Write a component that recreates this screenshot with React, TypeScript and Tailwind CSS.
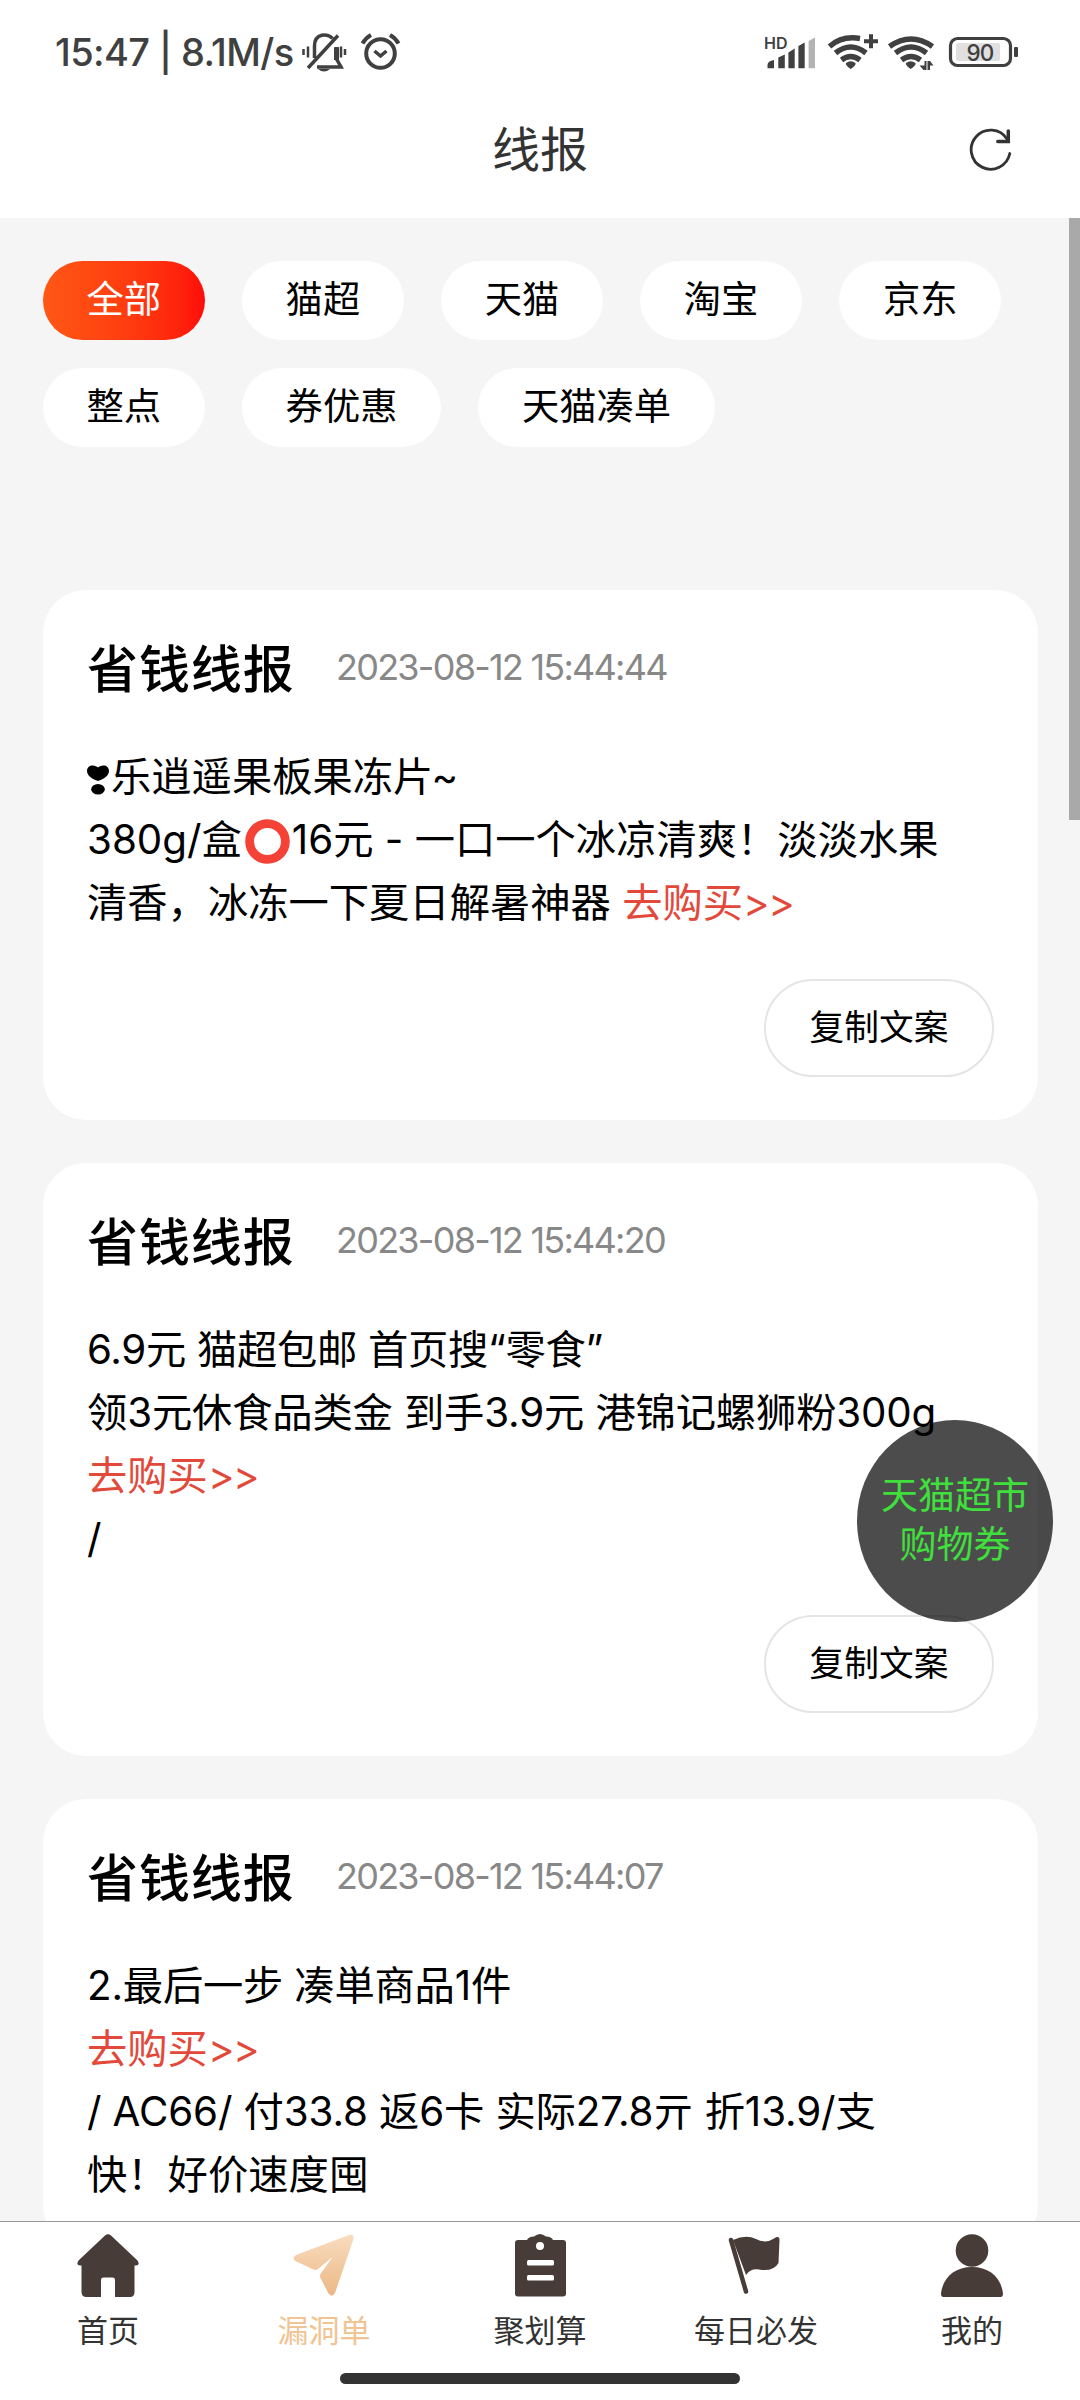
import type { ReactNode } from 'react'

const tabs = ['全部', '猫超', '天猫', '淘宝', '京东', '整点', '券优惠', '天猫凑单']

function HeartMark() {
  return (
    <svg className="inline-block w-[22px] h-[30px] mr-[2px] align-[-4px]" viewBox="0 0 22 30" role="img" aria-label="❣">
      <path d="M11 16C6 14.500 0 11 0 6C0 2.500 2.500 0.500 5.500 0.500C8 0.500 10 1.500 11 2.500C12 1.500 14 0.500 16.500 0.500C19.500 0.500 22 2.500 22 6C22 11 16 14.500 11 16Z" />
      <ellipse cx="11" cy="24.200" rx="6.800" ry="5.200" />
    </svg>
  )
}

function RedCircle() {
  return (
    <svg className="inline-block w-[45px] h-[45px] ml-[3px] mr-[2px] mt-[-22px] align-[-9px] relative top-[1px]" viewBox="0 0 45 45" role="img" aria-label="⭕">
      <circle cx="22.500" cy="22.500" r="17.900" fill="none" stroke="#f44336" strokeWidth="8.800" />
    </svg>
  )
}

function BuyLink() {
  return <a className="text-[#e2493b]">去购买<span className="tracking-[-1.500px]">&gt;&gt;</span></a>
}

function Line({ children, className = '' }: { children: ReactNode, className?: string }) {
  return <div className={`h-[63px] whitespace-nowrap ${className}`}>{children}</div>
}

function DealCard({ date, copyable = true, children }: { date: string, copyable?: boolean, children: ReactNode }) {
  return (
    <div className="rounded-[43px] bg-white px-11 pt-[42px] pb-[43px] shrink-0">
      <div className="flex items-center h-[70px]">
        <h2 className="w-[207px] pt-[5px] text-[51px] leading-[70px] font-medium tracking-[0.900px] whitespace-nowrap">省钱线报</h2>
        <p className="ml-[42px] text-[36px] leading-[70px] tracking-[-1.750px] text-[#888]">{date}</p>
      </div>
      <div className="mt-[43px] text-[40.300px] leading-[63px]">{children}</div>
      {copyable && (
        <div className="flex justify-end mt-[45px]">
          <button className="w-[230px] h-[98px] rounded-full border-2 border-[#e5e5e5] text-[34.700px] leading-[90px] pb-[3px]">复制文案</button>
        </div>
      )}
    </div>
  )
}

function StatusBar() {
  return (
    <div className="flex items-center h-[104px] pl-[55px] text-[#404040]">
      <span className="w-[247px] text-[38px] font-medium tracking-[-0.600px] whitespace-nowrap">15:47 | 8.1M/s</span>
      <svg className="w-[100px] h-[40px]" viewBox="302 32 100 40" fill="none" stroke="currentColor">
        <path d="M303.500 49v6M308 46.500v11M341 46.500v11M345 49v6" strokeWidth="2.500" />
        <path d="M314.500 58V46C314.500 33 328 33 332.500 38.500M338 35.500L308 68M336 47V58L341 67H317" strokeWidth="3.500" />
        <path d="M334 48v12h5V47z" fill="currentColor" stroke="none" />
        <path d="M318 69h12q-6 5-12 0z" fill="currentColor" stroke="none" />
        <circle cx="380.500" cy="53.500" r="14.300" strokeWidth="4" />
        <path d="M374.500 51l6 5 6-5" strokeWidth="3.500" />
        <path d="M362.500 43.500q3-5.500 8.500-8.500M398.500 43.500q-3-5.500-8.500-8.500" strokeWidth="4" />
      </svg>
      <svg className="w-[255px] h-[40px] ml-[363px]" viewBox="765 32 255 40" fill="currentColor">
        <text x="764" y="48.500" className="text-[16px] font-semibold">HD</text>
        <path d="M767.500 68.300V65q0-4 6.500-5v8.300zM778.300 68.300V57.500l6.500-3v13.800zM788.400 68.300V52.500l6.300-4v19.800zM798.400 68.300V46l6.300-3.500v25.800z" />
        <path d="M808.600 68.300V41l6.400-3.500v30.800z" fill="#b3b3b3" />
        <g fill="none" stroke="currentColor" strokeWidth="5.500">
          <path d="M829.500 46.500Q842 35.500 860 38.500" />
          <path d="M835.500 53Q850.700 41 866 53" />
          <path d="M841.500 60Q850.700 53 860 60" />
          <path d="M889.500 46.500Q911 31.500 932.500 46.500" />
          <path d="M895.500 53Q911 41 926.500 53" />
          <path d="M901.500 60Q911 53 920.500 60" />
        </g>
        <path d="M846 63q4.700-3.500 9.500 0 1 2-4.800 6-5.700-4-4.700-6zM906 63q4.700-3.500 9.500 0 1 2-4.800 6-5.700-4-4.700-6z" />
        <path d="M864 41.200h14M871 34.200v14" stroke="currentColor" strokeWidth="4" />
        <path d="M919.500 65.500h5V61h2v9h-3zM927.500 70v-9h2.500l3.500 4.500H930V70z" />
        <rect x="950.500" y="38.500" width="60" height="27" rx="7" fill="none" stroke="currentColor" strokeWidth="3.200" />
        <rect x="956" y="43" width="44" height="18" rx="2" fill="#e0e0e0" />
        <text x="980" y="60.800" textAnchor="middle" className="text-[22.500px] font-medium tracking-[-0.800px]">90</text>
        <rect x="1014" y="47" width="4" height="10" rx="1" />
      </svg>
    </div>
  )
}

const navItems = [
  {
    label: '首页',
    icon: (
      <path fill="#473c37" d="M29 1.500Q32 -1 35 1.500L61.500 26.500Q64.500 31 60 31.500H58.500V58Q58.500 63 54 63H39V46Q39 43.500 36.500 43.500H27.500Q25 43.500 25 46V63H10.500Q5.500 63 5.500 58V31.500H4Q-0.500 31 2.500 26.500Z" />
    ),
  },
  {
    label: '漏洞单',
    active: true,
    icon: (
      <>
        <defs>
          <linearGradient id="plane" x1="0" y1="0" x2="0" y2="1">
            <stop offset="0" stopColor="#f9dcc0" />
            <stop offset="1" stopColor="#ebb884" />
          </linearGradient>
        </defs>
        <path fill="url(#plane)" d="M57 1Q62 -0.500 61.500 5L43 59Q40 64 36.500 59.500L28.500 44Q27.500 42 28.500 40L40.500 23L26 35Q24 36.500 21.500 35.500L3.500 27Q-0.500 24.500 4 21Z" />
      </>
    ),
  },
  {
    label: '聚划算',
    icon: (
      <>
        <path fill="#473c37" d="M10 6H19Q20.500 2.500 26 2.500Q29 0 32 0Q35 0 38 2.500Q43.500 2.500 45 6H55Q58 6 58 9V59.500Q58 62.500 55 62.500H10Q7 62.500 7 59.500V9Q7 6 10 6Z" />
        <circle cx="32" cy="12" r="4" fill="#fff" />
        <rect x="19" y="26" width="27" height="5.500" rx="1.500" fill="#fff" />
        <rect x="19" y="41" width="27" height="5.500" rx="1.500" fill="#fff" />
      </>
    ),
  },
  {
    label: '每日必发',
    icon: (
      <>
        <path fill="#473c37" d="M9 6Q22 0 32 5Q42 10 50 4.500Q55.500 1 55.500 6L54.500 29Q50 37 38 36Q27 33 22 41Z" />
        <path stroke="#473c37" strokeWidth="4.500" strokeLinecap="round" d="M7 6L22 57.500" />
      </>
    ),
  },
  {
    label: '我的',
    icon: (
      <>
        <circle cx="32" cy="16.500" r="16.300" fill="#473c37" />
        <path fill="#473c37" d="M3.500 63Q1 63 1 59.500C3 43 15 33 32 33S61 43 63 59.500Q63 63 60.500 63Z" />
      </>
    ),
  },
]

export default function App() {
  return (
    <div className="relative flex flex-col w-[1080px] h-[2400px] overflow-hidden bg-[#f5f5f5] text-black font-['Inter','Noto_Sans_CJK_SC',sans-serif]">
      <header className="bg-white h-[218px] shrink-0">
        <StatusBar />
        <div className="grid grid-cols-[1fr_auto_1fr] items-center h-[88px] text-[#333]">
          <h1 className="col-start-2 pt-[2px] text-[48px] leading-[88px]">线报</h1>
          <svg className="w-[44px] h-[44px] justify-self-end mr-[68px]" viewBox="968 126 44 44" fill="none" stroke="#333" strokeLinecap="round">
            <path d="M1009.800 152.500A19.500 19.500 0 1 1 1007 138" strokeWidth="2.800" />
            <path d="M1008.300 130v10.500h-10.500" strokeWidth="3.500" />
          </svg>
        </div>
      </header>

      <main className="flex flex-col flex-1 min-h-0 overflow-hidden pl-[43px] pr-[42px] pt-[43px]">
        <div className="flex flex-wrap gap-x-[37.500px] gap-y-[28px] mb-[143px]">
          {tabs.map((tab, index) => (
            <button
              key={tab}
              className={`h-[79px] px-[43.500px] rounded-full text-[37.300px] leading-[75px] pb-[3px] ${index === 0 ? 'bg-linear-to-r from-[#ff5715] to-[#ff0a0a] text-white' : 'bg-white'}`}
            >
              {tab}
            </button>
          ))}
        </div>

        <div className="flex flex-col gap-[43px]">
          <DealCard date="2023-08-12 15:44:44">
            <Line><HeartMark />乐逍遥果板果冻片<span className="ml-[-2px]">~</span></Line>
            <Line>380g/盒<RedCircle />16元 - 一口一个冰凉清爽！淡淡水果</Line>
            <Line>清香，冰冻一下夏日解暑神器 <BuyLink /></Line>
          </DealCard>
          <DealCard date="2023-08-12 15:44:20">
            <Line className="tracking-[-0.300px]">6.9元 猫超包邮 首页搜“零食”</Line>
            <Line className="tracking-[-0.150px]">领3元休食品类金 到手3.9元 港锦记螺狮粉300g</Line>
            <Line><BuyLink /></Line>
            <Line>/</Line>
          </DealCard>
          <DealCard date="2023-08-12 15:44:07" copyable={false}>
            <Line className="tracking-[-0.200px]">2.最后一步 凑単商品1件</Line>
            <Line><BuyLink /></Line>
            <Line className="tracking-[-0.120px]">/ AC66/ 付33.8 返6卡 实际27.8亓 折13.9/支</Line>
            <Line>快！好价速度囤</Line>
          </DealCard>
        </div>
      </main>

      <nav className="bg-white border-t border-[#999] h-[179px] shrink-0">
        <div className="grid grid-cols-5 h-[151px] pt-[12px]">
          {navItems.map((item) => (
            <div key={item.label} className="flex flex-col items-center">
              <svg className="w-[64px] h-[64px]" viewBox="0 0 64 64" fill="none">{item.icon}</svg>
              <span className={`mt-[11px] text-[31px] leading-[44px] ${item.active ? 'text-[#f0c493]' : 'text-[#333]'}`}>{item.label}</span>
            </div>
          ))}
        </div>
        <div className="w-[400px] h-[11px] mx-auto rounded-full bg-[#333]" />
      </nav>

      {/* scrollbar */}
      <div className="absolute top-[218px] right-0 w-[11px] h-[602px] bg-[#a9a9a9]" />

      {/* floating coupon button */}
      <button className="absolute left-[857px] top-[1420px] w-[196px] h-[202px] rounded-[50%] bg-black/70 text-[#40e03c] text-[37px] leading-[49px] pb-[2px]">
        天猫超市
        <br />
        购物券
      </button>
    </div>
  )
}
